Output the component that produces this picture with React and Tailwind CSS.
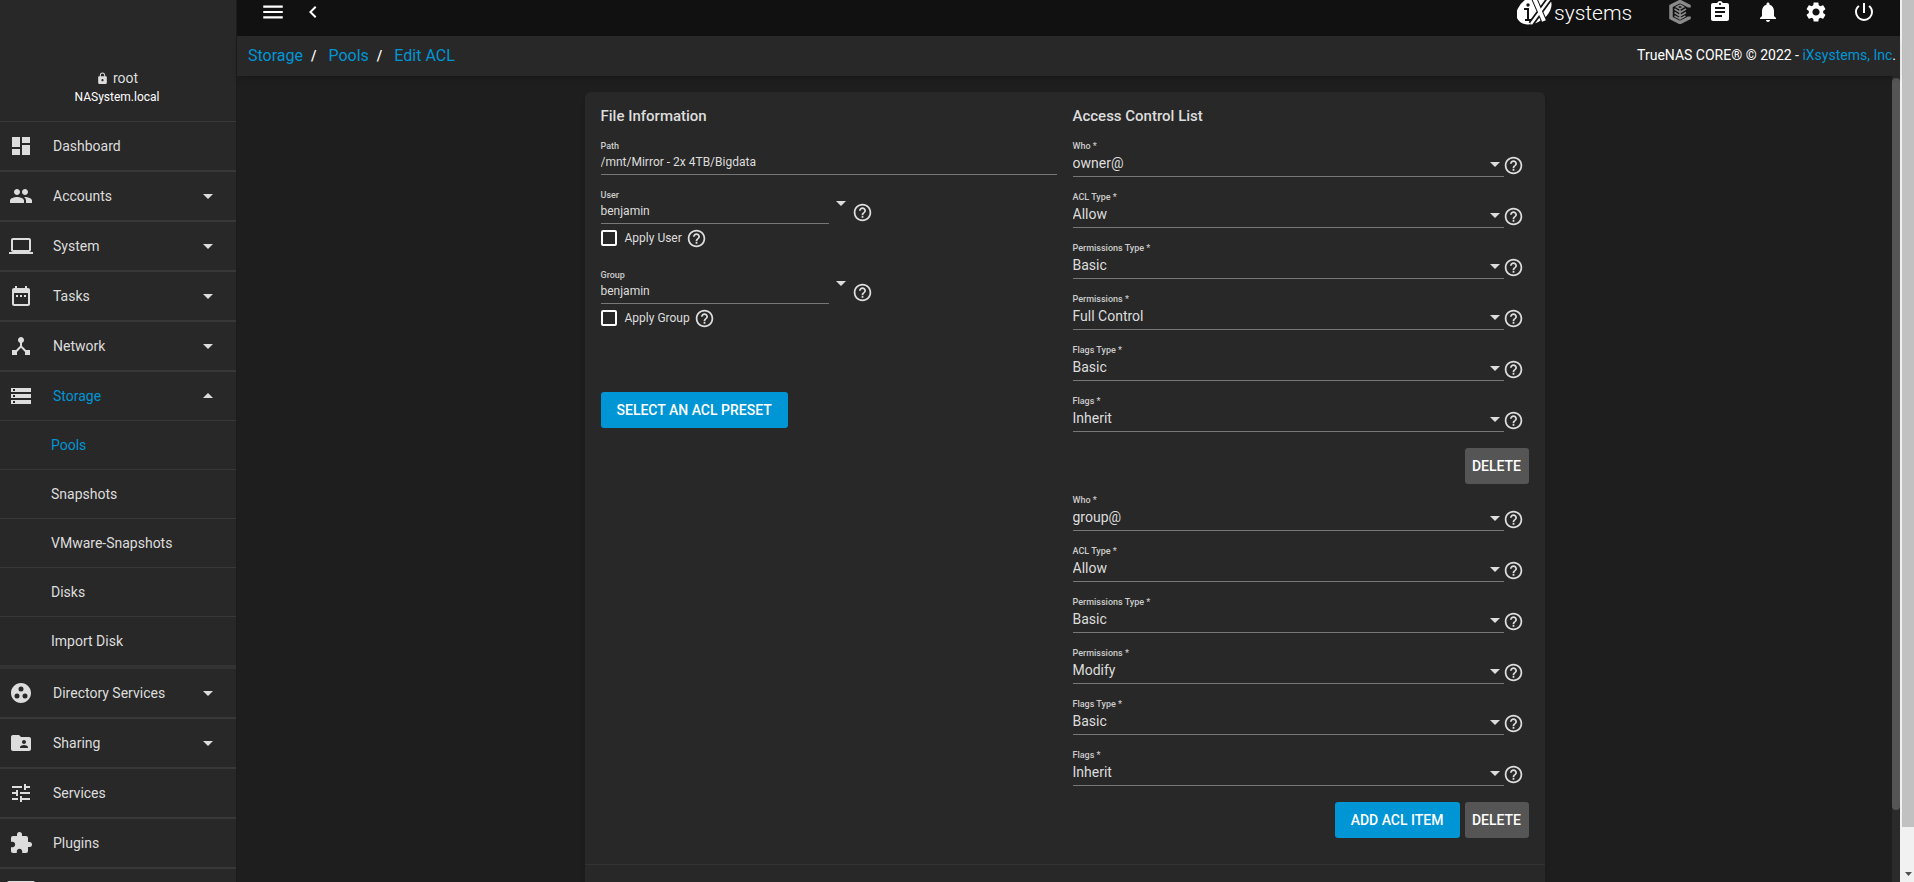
import React, { useState } from 'react';
import clsx from 'clsx';
import {
  MdArrowDropDown,
  MdArrowDropUp,
  MdAssignment,
  MdChevronLeft,
  MdDashboard,
  MdDateRange,
  MdExtension,
  MdFolderShared,
  MdGroupWork,
  MdHelpOutline,
  MdLaptop,
  MdLock,
  MdMenu,
  MdNotifications,
  MdPeople,
  MdPowerSettingsNew,
  MdSettings,
  MdStorage,
  MdTune,
} from 'react-icons/md';

const JailIcon = () => (
  <svg viewBox="0 0 28 24" width="28" height="24" fill="none" stroke="currentColor" strokeWidth="2">
    <rect x="1" y="1" width="26" height="22" rx="1" />
    <path d="M7 1v22M14 1v22M21 1v22" />
  </svg>
);

// three nodes joined at the centre
const NetworkIcon = () => (
  <svg viewBox="0 0 24 24" width="24" height="24" fill="currentColor">
    <path d="M17 16l-4-4V8.82C14.16 8.4 15 7.3 15 6c0-1.66-1.34-3-3-3S9 4.34 9 6c0 1.3.84 2.4 2 2.82V12l-4 4H3v5h5v-3.05l4-4.2 4 4.2V21h5v-5h-4z" />
  </svg>
);

const NAV_TOP = [
  { label: 'Dashboard', icon: MdDashboard },
  { label: 'Accounts', icon: MdPeople, expandable: true },
  { label: 'System', icon: MdLaptop, expandable: true },
  { label: 'Tasks', icon: MdDateRange, expandable: true },
  { label: 'Network', icon: NetworkIcon, expandable: true },
];

const STORAGE_ITEMS = ['Pools', 'Snapshots', 'VMware-Snapshots', 'Disks', 'Import Disk'];

const NAV_BOTTOM = [
  { label: 'Directory Services', icon: MdGroupWork, expandable: true },
  { label: 'Sharing', icon: MdFolderShared, expandable: true },
  { label: 'Services', icon: MdTune },
  { label: 'Plugins', icon: MdExtension },
];

const ACL_FIELDS = [
  { key: 'who', label: 'Who', options: ['owner@', 'group@', 'everyone@', 'User', 'Group'] },
  { key: 'type', label: 'ACL Type', options: ['Allow', 'Deny'] },
  { key: 'permsType', label: 'Permissions Type', options: ['Basic', 'Advanced'] },
  { key: 'perms', label: 'Permissions', options: ['Full Control', 'Modify', 'Read', 'Traverse'] },
  { key: 'flagsType', label: 'Flags Type', options: ['Basic', 'Advanced'] },
  { key: 'flags', label: 'Flags', options: ['Inherit', 'No Inherit'] },
];

const DEFAULT_ITEM = {
  who: 'owner@',
  type: 'Allow',
  permsType: 'Basic',
  perms: 'Full Control',
  flagsType: 'Basic',
  flags: 'Inherit',
};

const NavItem = ({ label, icon: Icon, expandable, open }) => (
  <a
    href="#"
    className={clsx('flex h-12 shrink-0 items-center pr-4 box-content', !open && 'border-b-2 border-[#383838]')}
  >
    <span className="flex w-[42px] justify-center">
      <Icon size={24} />
    </span>
    <span className={clsx('ml-[11px] flex-1 pb-px text-sm', open && 'text-[#0095d5]')}>{label}</span>
    {expandable && (open ? <MdArrowDropUp size={24} /> : <MdArrowDropDown size={24} />)}
  </a>
);

const Sidebar = () => (
  <aside className="flex w-[237px] shrink-0 flex-col overflow-hidden border-r border-[#1c1c1c] bg-[#282828]">
    <div className="flex h-[121px] shrink-0 flex-col items-center justify-end pr-0.5 pb-4">
      <div className="flex items-center gap-1 pb-px text-sm leading-5">
        <MdLock size={13} />
        <span>root</span>
      </div>
      <div className="text-xs leading-4 text-white">NASystem.local</div>
    </div>
    <nav className="flex flex-col border-t border-[#383838]">
      {NAV_TOP.map((item) => (
        <NavItem key={item.label} {...item} />
      ))}
      <NavItem label="Storage" icon={MdStorage} expandable open />
      <div className="flex shrink-0 flex-col border-b-4 border-[#333333]">
        {STORAGE_ITEMS.map((label) => (
          <a
            key={label}
            href="#"
            className={clsx(
              'flex h-[49px] items-center border-t border-[#383838] pl-[51px] text-sm',
              label === 'Pools' && 'text-[#0095d5]'
            )}
          >
            {label}
          </a>
        ))}
      </div>
      {NAV_BOTTOM.map((item) => (
        <NavItem key={item.label} {...item} />
      ))}
      <a href="#" aria-label="Jails" className="flex h-12 w-[42px] shrink-0 items-center justify-center">
        <JailIcon />
      </a>
    </nav>
  </aside>
);

const IxLogo = () => (
  <svg viewBox="0 0 118 28" width="118" height="28" className="shrink-0">
    <ellipse cx="17" cy="9.500" rx="19" ry="13" fill="#fff" transform="rotate(-32 17 9.500)" />
    <path d="M17 -2L27 21M33 -2L14 24" stroke="#111" strokeWidth="6" fill="none" />
    <path d="M17 -2L27 21" stroke="#fff" strokeWidth="4" fill="none" />
    <path d="M33 -2L14 24" stroke="#fff" strokeWidth="2.500" fill="none" />
    <path d="M7 9h4v11M8 20h6" stroke="#111" strokeWidth="2" fill="none" />
    <circle cx="11" cy="5" r="1.700" fill="#111" />
    <text x="37" y="20" fill="#fff" fontSize="21" fontWeight="300" fontFamily="Roboto, sans-serif">
      systems
    </text>
  </svg>
);

const TrueCommandIcon = () => (
  <svg viewBox="0 0 22 24" width="22" height="24" fill="none" stroke="#8a8a8a">
    <path d="M20 7.500V6L11 1.500 2 6v12l9 4.500 9-4.500v-1.500" strokeWidth="3.500" />
    <path d="M11 5l3.500 2L11 9 7.500 7zM11 9v11M5.500 9l5.500 3.500L17 9M5.500 12.500L11 16l6-3.500M5.500 16l5.500 3 5.500-3" strokeWidth="1.500" />
  </svg>
);

const TopBar = () => (
  <header className="flex h-9 shrink-0 items-start justify-between bg-[#111111] pr-6 pl-[23px] text-white">
    <div className="-mt-px flex items-center gap-[15px]">
      <button type="button" aria-label="Toggle menu">
        <MdMenu size={26} />
      </button>
      <button type="button" aria-label="Collapse menu">
        <MdChevronLeft size={24} />
      </button>
    </div>
    <div className="flex items-start">
      <IxLogo />
      <button type="button" aria-label="TrueCommand" className="mr-[17px] ml-[34px]">
        <TrueCommandIcon />
      </button>
      <div className="flex items-center gap-6">
        <button type="button" aria-label="Tasks">
          <MdAssignment size={24} />
        </button>
        <button type="button" aria-label="Alerts">
          <MdNotifications size={24} />
        </button>
        <button type="button" aria-label="Settings">
          <MdSettings size={24} />
        </button>
        <button type="button" aria-label="Power">
          <MdPowerSettingsNew size={24} />
        </button>
      </div>
    </div>
  </header>
);

const Breadcrumbs = () => (
  <div className="z-10 flex h-10 shrink-0 items-center justify-between bg-[#282828] pr-1 pl-[11px] shadow-md">
    <div className="flex items-center text-base text-white">
      <a href="#" className="text-[#0095d5]">Storage</a>
      <span className="mr-3 ml-2 text-sm font-medium">/</span>
      <a href="#" className="text-[#0095d5]">Pools</a>
      <span className="mr-3 ml-2 text-sm font-medium">/</span>
      <a href="#" className="text-[#0095d5]">Edit ACL</a>
    </div>
    <div className="pb-0.5 text-sm text-white">
      TrueNAS CORE® © 2022 - <a href="#" className="text-[#0095d5]">iXsystems, Inc</a>.
    </div>
  </div>
);

const Help = () => <MdHelpOutline size={21} className="-ml-px shrink-0" />;

const FieldLabel = ({ htmlFor, children }) => (
  <label htmlFor={htmlFor} className="pt-px text-[9px] leading-[14px] font-medium text-[#cccccc]">
    {children}
  </label>
);

const AclSelect = ({ id, label, options, value, onChange }) => (
  <div className="flex items-end">
    <div className="flex flex-1 flex-col border-b border-[#777777]">
      <FieldLabel htmlFor={id}>{label} *</FieldLabel>
      <div className="relative flex">
        <select
          id={id}
          value={value}
          onChange={(e) => onChange(e.target.value)}
          className="h-[23px] flex-1 appearance-none bg-transparent pb-[3px] text-sm outline-none"
        >
          {options.map((option) => (
            <option key={option}>{option}</option>
          ))}
        </select>
        <MdArrowDropDown size={24} className="pointer-events-none absolute right-[-3px] bottom-0" />
      </div>
    </div>
    <div className="pb-px">
      <Help />
    </div>
  </div>
);

const OwnerField = ({ id, label, value, onChange }) => (
  <div>
    <div className="flex">
      <div className="flex w-1/2 flex-col border-b border-[#777777]">
        <FieldLabel htmlFor={id}>{label}</FieldLabel>
        <input
          id={id}
          value={value}
          onChange={(e) => onChange(e.target.value)}
          className="h-[21px] bg-transparent pb-[3px] text-xs outline-none"
        />
      </div>
      <button type="button" aria-label={`Show ${label} options`} className="flex h-8 items-center">
        <MdArrowDropDown size={24} />
      </button>
      <div className="flex items-end pb-px">
        <Help />
      </div>
    </div>
    <div className="mt-1 flex h-5 items-center gap-[5px]">
      <label className="flex items-center gap-2 text-xs">
        <input type="checkbox" className="size-4 appearance-none rounded-xs border-2 border-white checked:bg-[#0095d5]" />
        Apply {label}
      </label>
      <Help />
    </div>
  </div>
);

const PrimaryButton = ({ children, ...props }) => (
  <button type="button" className="h-9 rounded-[3px] bg-[#0095d5] px-4 text-sm font-medium text-white uppercase" {...props}>
    {children}
  </button>
);

const App = () => {
  const [path, setPath] = useState('/mnt/Mirror - 2x 4TB/Bigdata');
  const [user, setUser] = useState('benjamin');
  const [group, setGroup] = useState('benjamin');
  const [items, setItems] = useState([
    { ...DEFAULT_ITEM, id: 1 },
    { ...DEFAULT_ITEM, id: 2, who: 'group@', perms: 'Modify' },
  ]);

  const updateItem = (id, key, value) =>
    setItems(items.map((item) => (item.id === id ? { ...item, [key]: value } : item)));

  return (
    <div className="flex h-screen overflow-hidden bg-[#1e1e1e] font-[Roboto,sans-serif] text-[#dddddd]">
      <Sidebar />
      <div className="flex min-w-0 flex-1 flex-col">
        <TopBar />
        <Breadcrumbs />
        <div className="flex min-h-0 flex-1">
          <main className="flex-1 overflow-hidden pt-4">
            <form className="mx-auto max-w-[960px] rounded-md bg-[#282828] shadow-md">
              <div className="grid grid-cols-2 gap-4 px-4 pt-[14px] pb-[26px]">
                <section>
                  <h2 className="mb-3 text-[15px] leading-5 font-medium">File Information</h2>
                  <div className="flex flex-col gap-3">
                    <div className="flex flex-col border-b border-[#777777]">
                      <FieldLabel htmlFor="path">Path</FieldLabel>
                      <input
                        id="path"
                        value={path}
                        onChange={(e) => setPath(e.target.value)}
                        className="h-[21px] bg-transparent pb-[3px] text-xs outline-none"
                      />
                    </div>
                    <div className="flex flex-col gap-[19px]">
                      <OwnerField id="user" label="User" value={user} onChange={setUser} />
                      <OwnerField id="group" label="Group" value={group} onChange={setGroup} />
                    </div>
                  </div>
                  <div className="mt-16">
                    <PrimaryButton>Select an ACL Preset</PrimaryButton>
                  </div>
                </section>

                <section>
                  <h2 className="mb-3 text-[15px] leading-5 font-medium">Access Control List</h2>
                  <div className="flex flex-col gap-2">
                    {items.map((item, index) => (
                      <div key={item.id}>
                        <div className="flex flex-col gap-3 pr-[5px]">
                          {ACL_FIELDS.map((field) => (
                            <AclSelect
                              key={field.key}
                              id={`${field.key}-${item.id}`}
                              label={field.label}
                              options={field.options}
                              value={item[field.key]}
                              onChange={(value) => updateItem(item.id, field.key, value)}
                            />
                          ))}
                        </div>
                        <div className="mt-4 flex justify-end gap-[5px]">
                          {index === items.length - 1 && (
                            <PrimaryButton onClick={() => setItems([...items, { ...DEFAULT_ITEM, id: Date.now() }])}>
                              Add ACL Item
                            </PrimaryButton>
                          )}
                          <button
                            type="button"
                            onClick={() => setItems(items.filter((other) => other.id !== item.id))}
                            className="h-9 w-16 rounded-[3px] bg-[#555555] text-sm font-medium text-white uppercase"
                          >
                            Delete
                          </button>
                        </div>
                      </div>
                    ))}
                  </div>
                </section>
              </div>
              <div className="h-32 border-t border-[#333333]" />
            </form>
          </main>
          <div className="flex w-2 shrink-0 flex-col bg-[#2a2a2a] pt-0.5">
            <div className="h-[91%] rounded-sm bg-[#555555]" />
          </div>
        </div>
      </div>
      <div className="flex w-3.5 shrink-0 flex-col bg-[#f1f1f1] pl-0.5">
        <div className="flex-1 bg-[#c1c1c1]" />
        <svg viewBox="0 0 12 55" width="12" height="55" fill="#505050">
          <path d="M3 45h7l-3.500 4z" />
        </svg>
      </div>
    </div>
  );
};

export default App;
